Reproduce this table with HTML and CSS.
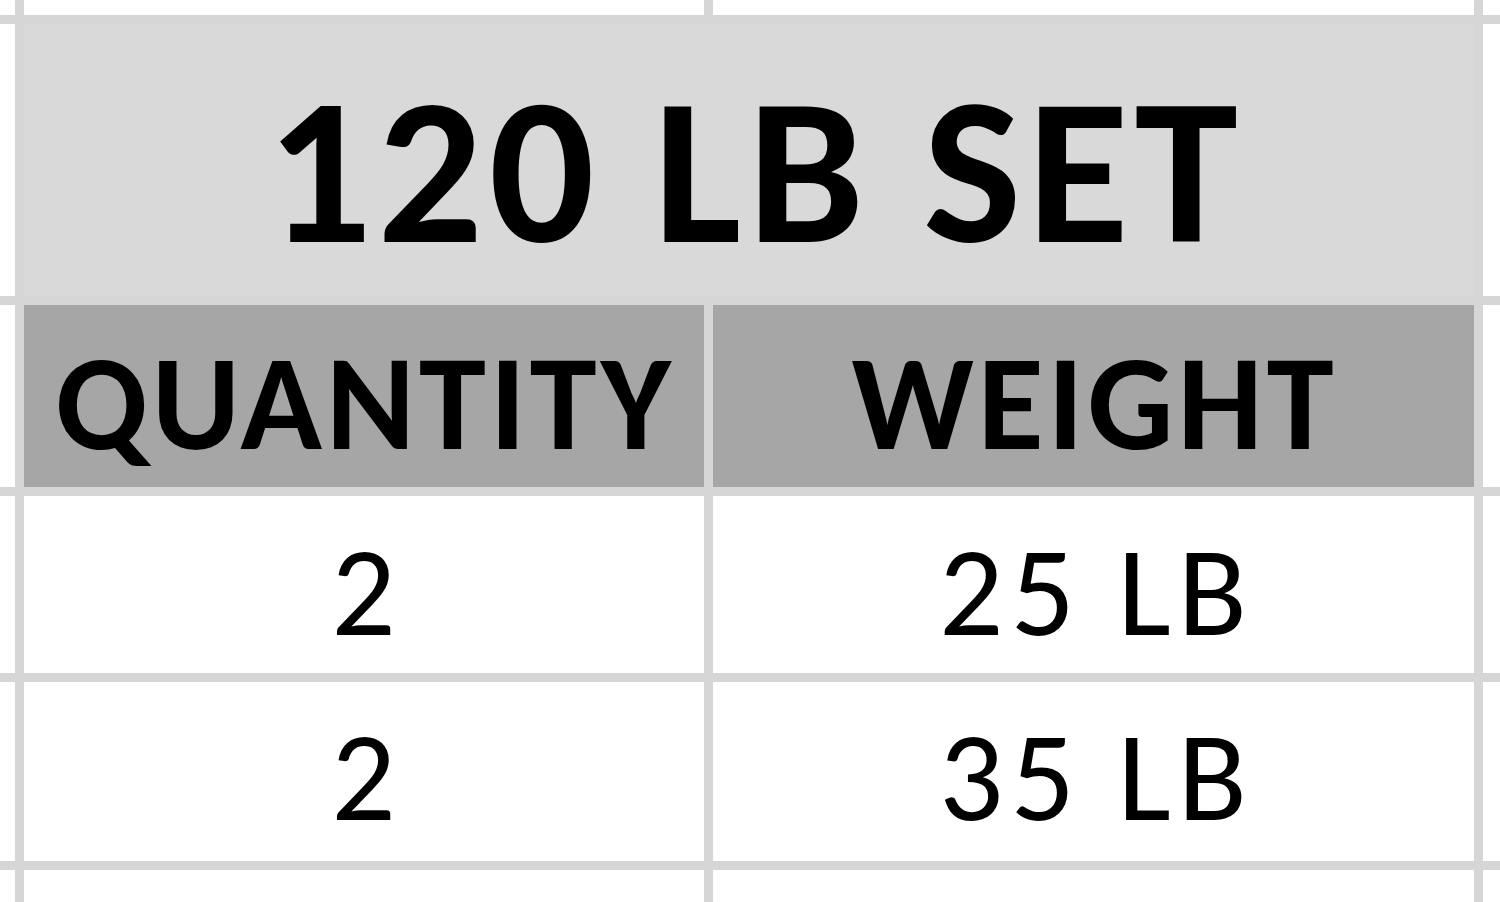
FILE: index.html
```html
<!DOCTYPE html>
<html lang="en">
<head>
<meta charset="utf-8">
<title>120 LB SET</title>
<link rel="stylesheet" href="styles.css">
</head>
<body>
<div class="sheet">
  <div class="cell stub"></div>
  <div class="cell stub"></div>
  <div class="cell stub"></div>
  <div class="cell stub"></div>

  <div class="cell stub"></div>
  <div class="cell title">120 LB SET</div>
  <div class="cell stub"></div>

  <div class="cell stub"></div>
  <div class="cell head">QUANTITY</div>
  <div class="cell head">WEIGHT</div>
  <div class="cell stub"></div>

  <div class="cell stub"></div>
  <div class="cell data row1">2</div>
  <div class="cell data row1">25 LB</div>
  <div class="cell stub"></div>

  <div class="cell stub"></div>
  <div class="cell data row2">2</div>
  <div class="cell data row2">35 LB</div>
  <div class="cell stub"></div>

  <div class="cell stub"></div>
  <div class="cell stub"></div>
  <div class="cell stub"></div>
  <div class="cell stub"></div>
</div>
</body>
</html>
```

FILE: styles.css
```css
html, body {
  margin: 0;
  padding: 0;
  background: #ffffff;
}

.sheet {
  width: 1500px;
  height: 902px;
  display: grid;
  grid-template-columns: 15px 680px 761px 17px;
  grid-template-rows: 15px 272px 182px 177px 179px 32px;
  gap: 9px;
  background: #d6d6d6;
  font-family: Carlito, Lato, "Open Sans", sans-serif;
  color: #000000;
  overflow: hidden;
}

.cell {
  background: #ffffff;
  display: flex;
  align-items: center;
  justify-content: center;
  line-height: 1;
  white-space: nowrap;
  box-sizing: border-box;
}

.title {
  grid-column: span 2;
  background: #d9d9d9;
  font-weight: 700;
  font-size: 208px;
  letter-spacing: 6px;
  padding-top: 22px;
  padding-left: 12px;
}

.head {
  background: #a6a6a6;
  font-weight: 700;
  font-size: 135px;
  letter-spacing: 4px;
  padding-top: 12px;
  padding-left: 2px;
}

.data {
  font-weight: 400;
  font-size: 127px;
  letter-spacing: 7px;
  padding-left: 6px;
}

.row1 {
  padding-top: 13px;
}

.row2 {
  padding-top: 10px;
}
```
